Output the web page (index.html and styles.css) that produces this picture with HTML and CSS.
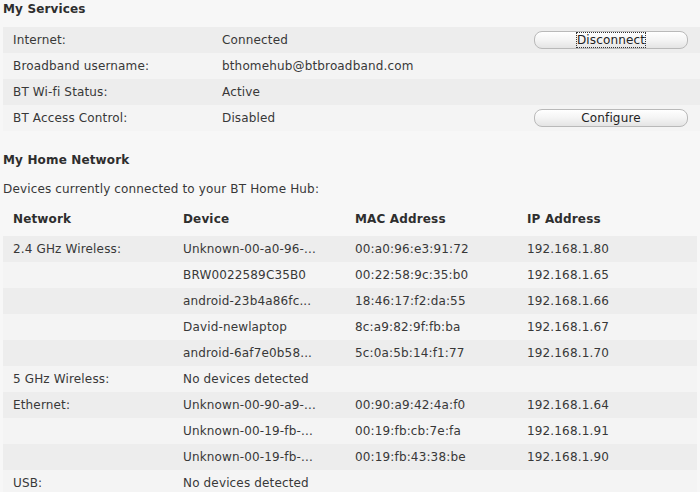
FILE: index.html
```html
<!DOCTYPE html>
<html>
<head>
<meta charset="utf-8">
<link rel="stylesheet" href="styles.css">
</head>
<body>
<div class="page">
  <h2 class="heading">My Services</h2>
  <div class="services">
    <div class="srow shade">
      <div class="cell">Internet:</div>
      <div class="cell">Connected</div>
      <div class="cell btncell"><button class="btn"><span class="focus">Disconnect</span></button></div>
    </div>
    <div class="srow light">
      <div class="cell">Broadband username:</div>
      <div class="cell">bthomehub@btbroadband.com</div>
      <div class="cell btncell"></div>
    </div>
    <div class="srow shade">
      <div class="cell">BT Wi-fi Status:</div>
      <div class="cell">Active</div>
      <div class="cell btncell"></div>
    </div>
    <div class="srow light">
      <div class="cell">BT Access Control:</div>
      <div class="cell">Disabled</div>
      <div class="cell btncell"><button class="btn">Configure</button></div>
    </div>
  </div>

  <h2 class="heading heading-net">My Home Network</h2>
  <p class="intro">Devices currently connected to your BT Home Hub:</p>

  <div class="devices">
    <div class="drow head">
      <div class="cell">Network</div>
      <div class="cell">Device</div>
      <div class="cell">MAC Address</div>
      <div class="cell">IP Address</div>
    </div>
    <div class="drow shade">
      <div class="cell">2.4 GHz Wireless:</div>
      <div class="cell">Unknown-00-a0-96-...</div>
      <div class="cell">00:a0:96:e3:91:72</div>
      <div class="cell">192.168.1.80</div>
    </div>
    <div class="drow light">
      <div class="cell"></div>
      <div class="cell">BRW0022589C35B0</div>
      <div class="cell">00:22:58:9c:35:b0</div>
      <div class="cell">192.168.1.65</div>
    </div>
    <div class="drow shade">
      <div class="cell"></div>
      <div class="cell">android-23b4a86fc...</div>
      <div class="cell">18:46:17:f2:da:55</div>
      <div class="cell">192.168.1.66</div>
    </div>
    <div class="drow light">
      <div class="cell"></div>
      <div class="cell">David-newlaptop</div>
      <div class="cell">8c:a9:82:9f:fb:ba</div>
      <div class="cell">192.168.1.67</div>
    </div>
    <div class="drow shade">
      <div class="cell"></div>
      <div class="cell">android-6af7e0b58...</div>
      <div class="cell">5c:0a:5b:14:f1:77</div>
      <div class="cell">192.168.1.70</div>
    </div>
    <div class="drow light">
      <div class="cell">5 GHz Wireless:</div>
      <div class="cell">No devices detected</div>
      <div class="cell"></div>
      <div class="cell"></div>
    </div>
    <div class="drow shade">
      <div class="cell">Ethernet:</div>
      <div class="cell">Unknown-00-90-a9-...</div>
      <div class="cell">00:90:a9:42:4a:f0</div>
      <div class="cell">192.168.1.64</div>
    </div>
    <div class="drow light">
      <div class="cell"></div>
      <div class="cell">Unknown-00-19-fb-...</div>
      <div class="cell">00:19:fb:cb:7e:fa</div>
      <div class="cell">192.168.1.91</div>
    </div>
    <div class="drow shade">
      <div class="cell"></div>
      <div class="cell">Unknown-00-19-fb-...</div>
      <div class="cell">00:19:fb:43:38:be</div>
      <div class="cell">192.168.1.90</div>
    </div>
    <div class="drow light">
      <div class="cell">USB:</div>
      <div class="cell">No devices detected</div>
      <div class="cell"></div>
      <div class="cell"></div>
    </div>
  </div>
</div>
</body>
</html>
```

FILE: styles.css
```css
html, body {
  margin: 0;
  padding: 0;
  background: #f7f7f7;
}
body {
  font-family: "DejaVu Sans", Verdana, sans-serif;
  font-size: 12px;
  letter-spacing: 0.15px;
  color: #383838;
  overflow: hidden;
}
.page {
  padding-left: 3px;
}
.heading {
  margin: 0;
  font-size: 12px;
  font-weight: bold;
  line-height: 18px;
  color: #2e2e2e;
}
.services {
  margin-top: 9px;
  width: 710px;
}
.srow {
  display: grid;
  grid-template-columns: 209px 322px 1fr;
  height: 26px;
  align-items: center;
}
.shade { background: #ededed; }
.light { background: #f4f4f4; }
.cell {
  padding-left: 10px;
  line-height: 26px;
  white-space: nowrap;
}
.btncell {
  display: flex;
  align-items: center;
  padding-left: 0;
}
.btn {
  width: 154px;
  height: 18px;
  padding: 0;
  border: 1px solid #b9b9b9;
  border-radius: 8px;
  background: linear-gradient(#ffffff 0%, #f4f4f4 50%, #e4e4e4 100%);
  font-family: "DejaVu Sans", Verdana, sans-serif;
  font-size: 12px;
  letter-spacing: 0.15px;
  color: #222222;
  line-height: 14px;
}
.focus {
  outline: 1px dotted #333333;
  outline-offset: 0px;
}
.heading-net {
  margin-top: 20px;
}
.intro {
  margin: 11px 0 0 0;
  line-height: 18px;
}
.devices {
  margin-top: 7px;
  width: 694px;
}
.drow {
  display: grid;
  grid-template-columns: 170px 172px 172px 180px;
  height: 26px;
}
.drow.head {
  height: 31px;
  font-weight: bold;
  color: #2e2e2e;
}
.drow.head .cell {
  line-height: 28px;
}
```
